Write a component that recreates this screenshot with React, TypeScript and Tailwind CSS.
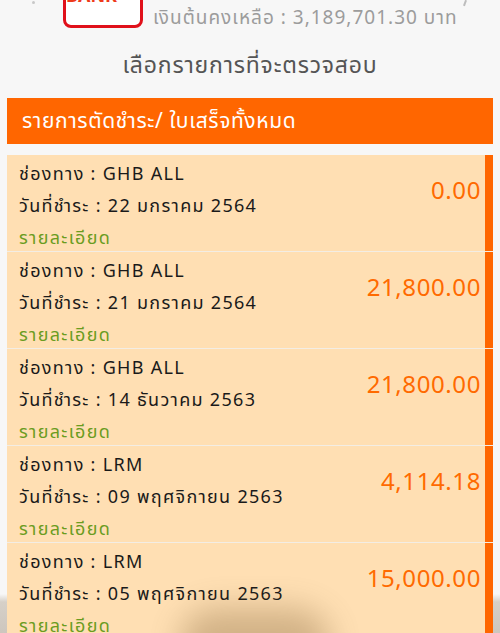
import React from 'react';

type Payment = {
  channel: string;
  date: string;
  amount: string;
};

const payments: Payment[] = [
  { channel: 'GHB ALL', date: '22 มกราคม 2564', amount: '0.00' },
  { channel: 'GHB ALL', date: '21 มกราคม 2564', amount: '21,800.00' },
  { channel: 'GHB ALL', date: '14 ธันวาคม 2563', amount: '21,800.00' },
  { channel: 'LRM', date: '09 พฤศจิกายน 2563', amount: '4,114.18' },
  { channel: 'LRM', date: '05 พฤศจิกายน 2563', amount: '15,000.00' },
];

const font = { fontFamily: '"Noto Sans", "Noto Sans Thai", "Liberation Sans", sans-serif' };

const PaymentCard = ({ item }: { item: Payment }) => {
  return (
    <div className="flex bg-[#ffdfb3] h-[97px] border-b border-[#f3ede4]">
      <div className="flex-1 pl-3 pt-[2px] text-[18px] tracking-[1.3px] leading-[32px] text-[#1a1a1a]">
        <div>ช่องทาง : {item.channel}</div>
        <div>วันที่ชำระ : {item.date}</div>
        <div className="text-[#6b9c1f]">รายละเอียด</div>
      </div>
      <div className="pr-1 pt-[20px] text-[24px] tracking-[0.6px] leading-[30px] text-[#ff6a00]">{item.amount}</div>
      <div className="w-2 bg-[#ff6600]" />
    </div>
  );
};

export default function App() {
  return (
    <div
      className="relative w-[500px] h-[633px] overflow-hidden bg-[linear-gradient(to_bottom,#f7f7f7_594px,#d6d0c8_602px,#cdc6be_633px)]"
      style={font}
    >
      {/* top account header, scrolled partly off screen */}
      <div className="flex items-end h-[26px]">
        <div className="w-[35px] flex justify-end">
          <div className="w-[3px] h-[3px] bg-[#c8c8c8] rounded-full mb-[22px]" />
        </div>
        <div className="ml-[28px] w-[80px] h-[54px] -mb-[2px] border-[3px] border-[#e0101a] rounded-[8px] bg-white flex items-end justify-center overflow-hidden">
          <span className="text-[18px] font-bold leading-none text-[#ee3a1a] mb-[21px]">GH BANK</span>
        </div>
        <div className="ml-[10px] whitespace-nowrap text-[19px] tracking-[1px] leading-[22px] text-[#9c9c9c] mb-[-2px]">
          เงินต้นคงเหลือ : 3,189,701.30 บาท
        </div>
        <div className="ml-auto mr-[34px] mb-[20px] w-[2px] h-[6px] bg-[#bdbdbd] rotate-[20deg]" />
      </div>

      <div className="mt-[23px] text-center text-[23px] tracking-[0.8px] leading-[30px] text-[#555555]">
        เลือกรายการที่จะตรวจสอบ
      </div>

      <div className="mx-[7px] mt-[19px] h-[46px] bg-[#ff6600] flex items-center px-[15px]">
        <span className="text-[21px] tracking-[0.6px] text-white">รายการตัดชำระ/ ใบเสร็จทั้งหมด</span>
      </div>

      <div className="mx-[7px] mt-[11px] flex flex-col">
        {payments.map((p, i) => (
          <PaymentCard key={i} item={p} />
        ))}
      </div>

      {/* blurred shadow at the bottom edge */}
      <div className="pointer-events-none absolute left-[180px] bottom-[-45px] w-[150px] h-[70px] rounded-full bg-[#6a4a20] opacity-30 blur-[16px]" />
    </div>
  );
}
